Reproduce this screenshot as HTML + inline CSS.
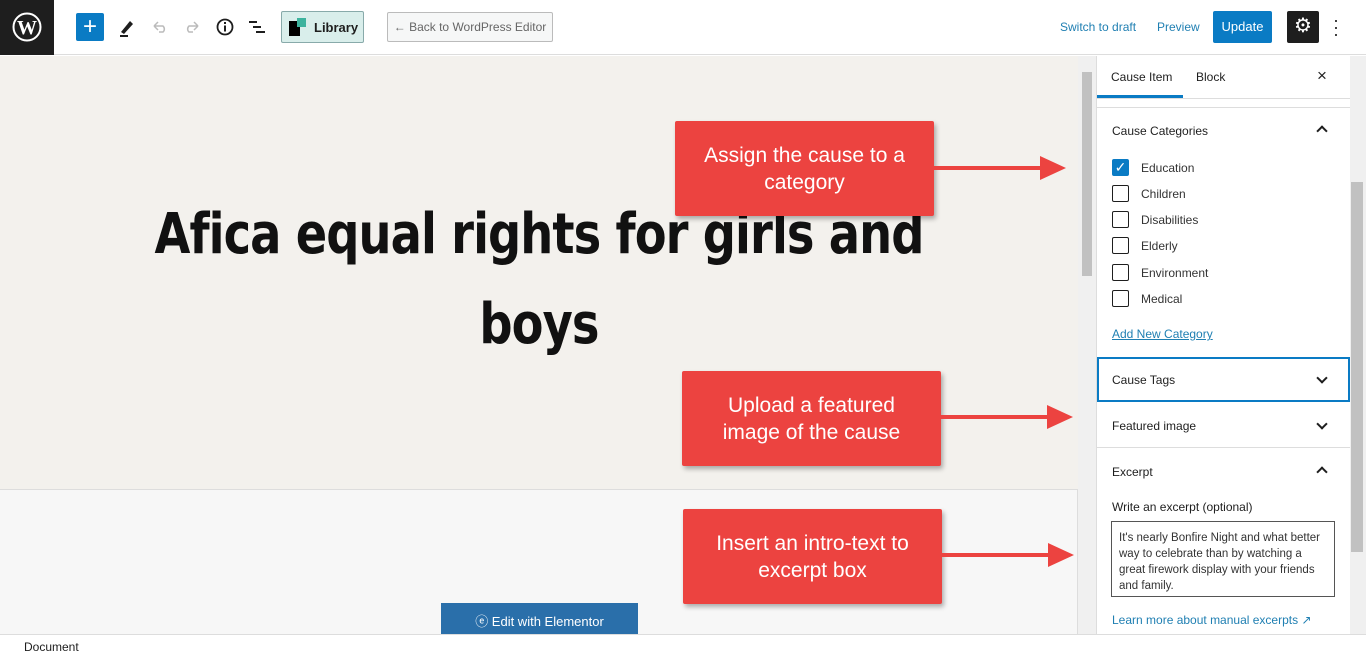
<!DOCTYPE html>
<html><head><style>
*{box-sizing:border-box;margin:0;padding:0}
body{width:1366px;height:657px;overflow:hidden;font-family:"Liberation Sans",sans-serif;background:#fff;position:relative;font-size:13px;color:#1e1e1e}
.a{position:absolute}
.top{left:0;top:0;width:1366px;height:55px;border-bottom:1px solid #ddd;background:#fff}
.callout{position:absolute;background:#ec4340;color:#fff;font-size:21px;text-align:center;line-height:27px;box-shadow:2px 3px 5px rgba(0,0,0,.3);display:flex;align-items:center;justify-content:center;border-radius:2px}
.cb{position:absolute;left:1112px;width:17px;height:17px;border:1px solid #1e1e1e;border-radius:2px;background:#fff}
.lbl{position:absolute;left:1141px;font-size:12px;color:#333}
.sec{position:absolute;left:1097px;width:253px;border-top:1px solid #ddd}
.chev{position:absolute;left:1318px;width:8px;height:8px;border-right:2px solid #1e1e1e;border-bottom:2px solid #1e1e1e}
</style></head><body>
<div class="a top"></div>
<div class="a" style="left:0;top:0;width:54px;height:55px;background:#1e1e1e"></div>
<svg class="a" style="left:12px;top:12px" width="30" height="30" viewBox="0 0 30 30"><circle cx="15" cy="15" r="13.5" fill="none" stroke="#fff" stroke-width="2"/><text x="15" y="22" font-family="Liberation Serif" font-weight="bold" font-size="20" fill="#fff" text-anchor="middle">W</text></svg>
<div class="a" style="left:76px;top:13px;width:28px;height:28px;background:#0a7bc4;border-radius:2px;color:#fff;font-size:24px;line-height:27px;text-align:center">+</div>
<svg class="a" style="left:117px;top:16px" width="20" height="22"><path d="M4 16 L13 5 L16 8 L7 18 Z" fill="#1e1e1e"/><rect x="3" y="19" width="8" height="2" fill="#1e1e1e"/></svg>
<svg class="a" style="left:150px;top:18px" width="20" height="16"><path d="M4 8 H13 A4 4 0 0 1 13 14 H9 M4 8 L8 4 M4 8 L8 12" stroke="#bbb" stroke-width="1.5" fill="none"/></svg>
<svg class="a" style="left:182px;top:18px" width="20" height="16"><path d="M16 8 H7 A4 4 0 0 0 7 14 H11 M16 8 L12 4 M16 8 L12 12" stroke="#bbb" stroke-width="1.5" fill="none"/></svg>
<svg class="a" style="left:215px;top:17px" width="20" height="20"><circle cx="10" cy="10" r="7.5" stroke="#1e1e1e" stroke-width="1.8" fill="none"/><rect x="9" y="8.5" width="2" height="6" fill="#1e1e1e"/><rect x="9" y="5" width="2" height="2" fill="#1e1e1e"/></svg>
<svg class="a" style="left:247px;top:18px" width="20" height="18"><rect x="2" y="3" width="8" height="2" fill="#1e1e1e"/><rect x="6" y="8" width="8" height="2" fill="#1e1e1e"/><rect x="9" y="13" width="9" height="2" fill="#1e1e1e"/></svg>
<div class="a" style="left:281px;top:11px;width:83px;height:32px;background:#d9eeeb;border:1px solid #8aa;border-radius:2px"></div>
<div class="a" style="left:289px;top:21px;width:11px;height:15px;background:#000"></div>
<div class="a" style="left:297px;top:18px;width:9px;height:9px;background:#3db39e"></div>
<div class="a" style="left:314px;top:20px;font-size:13px;font-weight:bold;color:#1e1e1e">Library</div>
<div class="a" style="left:387px;top:12px;width:166px;height:30px;background:#f6f7f7;border:1px solid #bbb;border-radius:2px;font-size:12px;color:#666;line-height:28px;text-align:center">← Back to WordPress Editor</div>
<div class="a" style="left:1060px;top:20px;font-size:12px;color:#1f7fb2">Switch to draft</div>
<div class="a" style="left:1157px;top:20px;font-size:12px;color:#1f7fb2">Preview</div>
<div class="a" style="left:1213px;top:11px;width:59px;height:32px;background:#0a7bc4;border-radius:2px;color:#fff;font-size:13px;line-height:32px;text-align:center">Update</div>
<div class="a" style="left:1287px;top:11px;width:32px;height:32px;background:#1e1e1e;border-radius:2px;color:#fff;font-size:20px;line-height:31px;text-align:center">⚙</div>
<div class="a" style="left:1333px;top:17px;font-size:18px;line-height:7px;color:#1e1e1e">·<br>·<br>·</div>

<div class="a" style="left:0;top:56px;width:1078px;height:578px;background:#f3f1ed"></div>
<div class="a" style="left:0;top:489px;width:1078px;height:145px;background:#f7f7f7;border-top:1px solid #ddd;border-right:1px solid #ddd"></div>
<div class="a" style="left:0;top:190px;width:1078px;text-align:center;font-family:'DejaVu Sans Condensed','Liberation Sans Narrow',sans-serif;font-weight:bold;font-size:56px;line-height:90px;color:#111;letter-spacing:-1px;transform:scaleX(0.92);transform-origin:539px 0">Afica equal rights for girls and<br>boys</div>
<div class="a" style="left:441px;top:603px;width:197px;height:31px;background:#2a6faa;color:#fff;font-size:13px;line-height:38px;text-align:center">ⓔ Edit with Elementor</div>

<div class="a" style="left:1078px;top:56px;width:18px;height:578px;background:#f0f0f0"></div>
<div class="a" style="left:1082px;top:72px;width:10px;height:204px;background:#c1c1c1"></div>
<div class="a" style="left:1350px;top:56px;width:16px;height:578px;background:#f0f0f0"></div>
<div class="a" style="left:1351px;top:182px;width:12px;height:370px;background:#c1c1c1"></div>
<div class="a" style="left:1096px;top:56px;width:1px;height:578px;background:#ddd"></div>

<div class="a" style="left:1111px;top:70px;font-size:12px">Cause Item</div>
<div class="a" style="left:1097px;top:95px;width:86px;height:3px;background:#0a7bc4"></div>
<div class="a" style="left:1196px;top:70px;font-size:12px">Block</div>
<div class="a" style="left:1317px;top:66px;font-size:17px">×</div>
<div class="sec" style="top:98px"></div>
<div class="sec" style="top:107px"></div>
<div class="a" style="left:1112px;top:124px;font-size:12px">Cause Categories</div>
<div class="chev" style="top:127px;transform:rotate(-135deg)"></div>
<div class="cb" style="top:159px;background:#0a7bc4;border-color:#0a7bc4;color:#fff;font-size:14px;line-height:15px;text-align:center">✓</div>
<div class="lbl" style="top:161px">Education</div>
<div class="cb" style="top:185px"></div><div class="lbl" style="top:187px">Children</div>
<div class="cb" style="top:211px"></div><div class="lbl" style="top:213px">Disabilities</div>
<div class="cb" style="top:237px"></div><div class="lbl" style="top:239px">Elderly</div>
<div class="cb" style="top:264px"></div><div class="lbl" style="top:266px">Environment</div>
<div class="cb" style="top:290px"></div><div class="lbl" style="top:292px">Medical</div>
<div class="a" style="left:1112px;top:327px;font-size:12px;color:#1f7fb2;text-decoration:underline">Add New Category</div>
<div class="a" style="left:1097px;top:357px;width:253px;height:45px;border:2px solid #0a7bc4"></div>
<div class="a" style="left:1112px;top:373px;font-size:12px">Cause Tags</div>
<div class="chev" style="top:374px;transform:rotate(45deg)"></div>
<div class="sec" style="top:447px"></div>
<div class="a" style="left:1112px;top:419px;font-size:12px">Featured image</div>
<div class="chev" style="top:420px;transform:rotate(45deg)"></div>
<div class="a" style="left:1112px;top:465px;font-size:12px">Excerpt</div>
<div class="chev" style="top:468px;transform:rotate(-135deg)"></div>
<div class="a" style="left:1112px;top:500px;font-size:12px">Write an excerpt (optional)</div>
<div class="a" style="left:1111px;top:521px;width:224px;height:76px;border:1px solid #555;padding:8px 7px;font-size:11.5px;line-height:16px;color:#333">It's nearly Bonfire Night and what better way to celebrate than by watching a great firework display with your friends and family.</div>
<div class="a" style="left:1112px;top:613px;font-size:12px;color:#1f7fb2">Learn more about manual excerpts ↗</div>

<div class="a" style="left:0;top:634px;width:1366px;height:23px;background:#fff;border-top:1px solid #ddd"></div>
<div class="a" style="left:24px;top:640px;font-size:12px">Document</div>

<div class="callout" style="left:675px;top:121px;width:259px;height:95px">Assign the cause to a<br>category</div>
<div class="callout" style="left:682px;top:371px;width:259px;height:95px">Upload a featured<br>image of the cause</div>
<div class="callout" style="left:683px;top:509px;width:259px;height:95px">Insert an intro-text to<br>excerpt box</div>
<svg class="a" style="left:930px;top:150px" width="140" height="36"><path d="M2 16 H110 V6 L136 18 L110 30 V20 H2 Z" fill="#ec4340"/></svg>
<svg class="a" style="left:937px;top:399px" width="140" height="36"><path d="M2 16 H110 V6 L136 18 L110 30 V20 H2 Z" fill="#ec4340"/></svg>
<svg class="a" style="left:938px;top:537px" width="140" height="36"><path d="M2 16 H110 V6 L136 18 L110 30 V20 H2 Z" fill="#ec4340"/></svg>
</body></html>
